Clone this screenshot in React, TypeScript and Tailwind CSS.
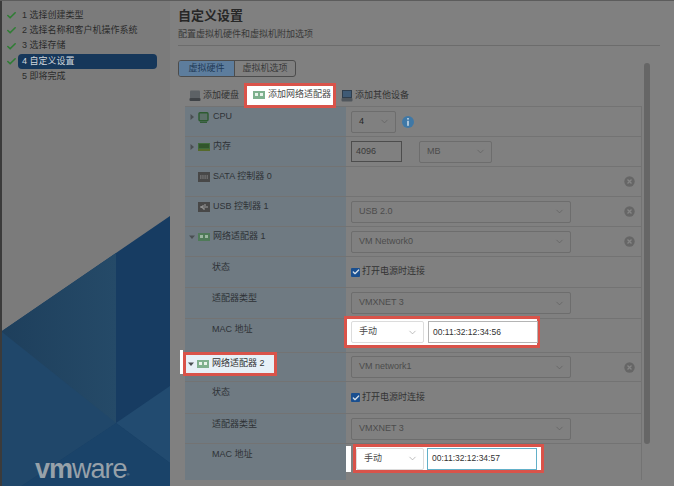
import { Check, ChevronDown } from "lucide-react";
import type { ReactNode } from "react";

const FONT = "font-['Liberation_Sans','Noto_Sans_CJK_SC',sans-serif]";

function Chevron({ className = "text-[#5f5f5f]" }: { className?: string }) {
  return <ChevronDown size={11} strokeWidth={1.5} className={className} />;
}

function Select({ w, text, light = false, dark = false }: { w: string; text: string; light?: boolean; dark?: boolean }) {
  return (
    <div
      className={`${w} h-[22px] shrink-0 flex items-center justify-between pl-[7px] pr-[5px] rounded-[2px] border text-[9px] ${
        light ? "bg-white border-[#dcdcdc] text-[#4a4a4a]" : dark ? "border-[#6d6d6d] text-[#262626]" : "border-[#6d6d6d] text-[#4c4c4c]"
      }`}
    >
      <span>{text}</span>
      <Chevron className={light ? "text-[#a0a0a0]" : "text-[#5f5f5f]"} />
    </div>
  );
}

function Remove() {
  return (
    <svg width="11" height="11" viewBox="0 0 11 11" className="shrink-0">
      <circle cx="5.5" cy="5.5" r="5.2" fill="#666" />
      <path d="M3.5 3.5l4 4M7.5 3.5l-4 4" stroke="#858585" strokeWidth="1.3" />
    </svg>
  );
}

function Arrow({ open = false }: { open?: boolean }) {
  return (
    <svg width="6" height="6" viewBox="0 0 6 6" className="shrink-0">
      {open ? <path d="M0 1.5h6L3 5z" fill="#4a4f52" /> : <path d="M1.5 0v6L5 3z" fill="#4a4f52" />}
    </svg>
  );
}

function NicIcon({ light = false }: { light?: boolean }) {
  return (
    <svg width="12" height="8" viewBox="0 0 12 8" className="shrink-0">
      <rect width="12" height="8" fill={light ? "#7fb08e" : "#4f7a58"} />
      <rect x="2" y="2" width="3" height="3" fill={light ? "#e8f3ea" : "#9bb5a0"} />
      <rect x="7" y="2" width="3" height="3" fill={light ? "#e8f3ea" : "#9bb5a0"} />
    </svg>
  );
}

function CpuIcon() {
  return (
    <svg width="11" height="11" viewBox="0 0 11 11" className="shrink-0">
      <rect x="1" y="0.8" width="9" height="8" rx="1" fill="#5c7068" stroke="#2d5b30" strokeWidth="1.4" />
      <path d="M2 10.3h7" stroke="#2d5b30" strokeWidth="1.2" />
    </svg>
  );
}

function RamIcon() {
  return (
    <svg width="12" height="10" viewBox="0 0 12 10" className="shrink-0">
      <rect y="1" width="12" height="6" fill="#3f6a3b" />
      <path d="M2 2v4M4 2v4M6 2v4M8 2v4M10 2v4" stroke="#25401f" strokeWidth="1" />
      <rect y="7" width="12" height="2" fill="#566a2c" />
    </svg>
  );
}

function ChipIcon({ usb = false }: { usb?: boolean }) {
  return (
    <svg width="12" height="10" viewBox="0 0 12 10" className="shrink-0">
      <rect width="12" height="10" fill="#484848" />
      {usb ? (
        <path d="M2 5h8M6 3h2M5 7h2M3.500 5l2-2M3.500 5l2 2" stroke="#b5b5b5" strokeWidth="0.8" fill="none" />
      ) : (
        <path d="M2 4h8M2 6h8" stroke="#8d8d8d" strokeWidth="1" strokeDasharray="1.500 0.700" />
      )}
    </svg>
  );
}

function DiskIcon() {
  return (
    <svg width="12" height="12" viewBox="0 0 12 12" className="shrink-0">
      <rect x="1" y="0.500" width="10" height="8" rx="1" fill="#5d6266" />
      <rect x="0.500" y="8" width="11" height="3" rx="1" fill="#3f4347" />
    </svg>
  );
}

function DeviceIcon() {
  return (
    <svg width="12" height="12" viewBox="0 0 12 12" className="shrink-0">
      <rect x="1.500" y="0.500" width="9" height="7" fill="#3f5a75" stroke="#2f3d4c" />
      <rect x="0.500" y="8" width="11" height="3.500" rx="1" fill="#50565c" />
    </svg>
  );
}

function Row({
  h,
  left,
  right,
  remove = false,
  last = false,
}: {
  h: string;
  left: ReactNode;
  right?: ReactNode;
  remove?: boolean;
  last?: boolean;
}) {
  return (
    <div className={`${h} grid grid-cols-[161px_1fr] ${last ? "" : "border-b border-[#737373]"}`}>
      <div className="relative bg-[#6f7a82] border-r-0 flex items-start text-[9px] text-[#2e3236]">{left}</div>
      <div className="relative flex items-center pl-[5px] pr-[6px]">
        <div className="flex-1 flex items-center gap-[6px]">{right}</div>
        {remove && <Remove />}
      </div>
    </div>
  );
}

function HwLabel({ arrow, open, icon, text }: { arrow?: boolean; open?: boolean; icon: ReactNode; text: string }) {
  return (
    <div className="flex items-center h-[12px] mt-[4px] pl-[4px] w-full">
      <span className="w-[9px] flex justify-start">{arrow && <Arrow open={open} />}</span>
      <span className="w-[15px] ml-[0px] flex justify-start pl-[0px]">{icon}</span>
      <span>{text}</span>
    </div>
  );
}

function SubLabel({ text }: { text: string }) {
  return <div className="pl-[27px] mt-[4px] leading-[12px]">{text}</div>;
}

function Mac({ value, focus = false }: { value: string; focus?: boolean }) {
  return (
    <div
      className={`w-[110px] h-[22px] shrink-0 bg-white border flex items-center pl-[4px] text-[8.5px] text-[#333] ${
        focus ? "border-[#62b0c9]" : "border-[#b4b4b4]"
      }`}
    >
      {value}
    </div>
  );
}

function StepItem({ n, label, done, active }: { n: number; label: string; done?: boolean; active?: boolean }) {
  return (
    <div className="flex items-center h-[15.300px]">
      <span className="w-[14px] shrink-0 pl-[4px]">
        {done && <Check size={11} strokeWidth={3.500} className="text-[#2f7d34]" />}
      </span>
      <span
        className={`ml-[2px] flex-1 h-[15px] pl-[4px] flex items-center rounded-[4px] text-[9px] ${
          active ? "bg-[#16375a] text-[#cfd6dc]" : "text-[#2b2b2b]"
        }`}
      >
        {n} {label}
      </span>
    </div>
  );
}

export default function App() {
  return (
    <div className={`${FONT} w-[674px] h-[486px] overflow-hidden flex bg-[#808080] border-t border-[#5c5c5c]`}>
      <aside className="relative w-[170px] shrink-0 h-full bg-[#7b7b7b] border-l-2 border-[#3b3b3b] overflow-hidden">
        <svg className="absolute inset-0" width="168" height="486" viewBox="2 0 168 486">
          <defs>
            <linearGradient id="g" x1="0" x2="1" y1="0" y2="0">
              <stop offset="0" stopColor="#1e3f5c" />
              <stop offset="1" stopColor="#254a68" />
            </linearGradient>
          </defs>
          <polygon points="2,330 170,215 170,486 2,486" fill="#173c62" />
          <polygon points="2,330 116,252 116,422 20,486 2,486" fill="url(#g)" />
          <polygon points="2,331 116,422 20,486 2,486" fill="#20476a" />
          <polygon points="116,422 170,385 170,462" fill="#224b70" />
          <polygon points="116,422 170,462 170,486 20,486" fill="#1a4369" />
        </svg>
        <div className="relative pt-[7px] pr-[13px]">
          <StepItem n={1} label="选择创建类型" done />
          <StepItem n={2} label="选择名称和客户机操作系统" done />
          <StepItem n={3} label="选择存储" done />
          <StepItem n={4} label="自定义设置" done active />
          <StepItem n={5} label="即将完成" />
        </div>
        <div className="absolute left-[33px] bottom-[2px] text-[27px] leading-[30px] text-[#97a1a9] tracking-[-1px]">
          <span className="font-bold">vm</span>
          <span>ware</span>
          <sup className="text-[4px]">®</sup>
        </div>
      </aside>

      <main className="flex-1 flex pl-[8px] overflow-hidden">
        <div className="w-[474px] shrink-0 flex flex-col">
          <h1 className="mt-[6px] text-[13px] leading-[18px] font-bold text-[#272727]">自定义设置</h1>
          <p className="mt-[3px] text-[9px] leading-[13px] text-[#383838]">配置虚拟机硬件和虚拟机附加选项</p>
          <div className="mt-[4px] h-px w-[482px] bg-[#6c6c6c]" />

          <div className="mt-[14px] flex w-fit h-[17px] rounded-[3px] border border-[#4c4c4c] overflow-hidden text-[9px]">
            <div className="w-[55px] flex items-center justify-center bg-[#5d7d9d] text-[#1f3a57]">虚拟硬件</div>
            <div className="w-[61px] flex items-center justify-center border-l border-[#4c4c4c] text-[#3a3a3a]">虚拟机选项</div>
          </div>

          <div className="mt-[8px] h-[21px] flex items-center text-[9px] text-[#333] pl-[11px]">
            <DiskIcon />
            <span className="ml-[2px]">添加硬盘</span>
            <div className="ml-[5px] w-[92px] h-[25px] -mt-[1px] shrink-0 bg-white border-[3px] border-[#d9534a] flex items-center pl-[6px] text-[#4a4a4a] z-10">
              <NicIcon light />
              <span className="ml-[3px] whitespace-nowrap">添加网络适配器</span>
            </div>
            <span className="ml-[5px]"><DeviceIcon /></span>
            <span className="ml-[2px]">添加其他设备</span>
          </div>

          <div className="ml-[7px] w-[457px] border-t border-r border-[#737373] text-[9px]">
            <Row
              h="h-[30px]"
              left={<HwLabel arrow icon={<CpuIcon />} text="CPU" />}
              right={
                <>
                  <Select w="w-[45px]" text="4" dark />
                  <svg width="12" height="12" viewBox="0 0 12 12" className="shrink-0">
                    <circle cx="6" cy="6" r="6" fill="#3f78a6" />
                    <rect x="5.200" y="2" width="1.600" height="1.600" fill="#c8d8e4" />
                    <rect x="5.200" y="4.800" width="1.600" height="5" fill="#c8d8e4" />
                  </svg>
                </>
              }
            />
            <Row
              h="h-[30px]"
              left={<HwLabel arrow icon={<RamIcon />} text="内存" />}
              right={
                <>
                  <div className="w-[51px] h-[21px] shrink-0 border border-[#4d4d4d] flex items-center pl-[4px] text-[#3a3a3a]">4096</div>
                  <span className="w-[5px]" />
                  <Select w="w-[73px]" text="MB" />
                </>
              }
            />
            <Row h="h-[30px]" left={<HwLabel icon={<ChipIcon />} text="SATA 控制器 0" />} remove />
            <Row
              h="h-[30px]"
              left={<HwLabel icon={<ChipIcon usb />} text="USB 控制器 1" />}
              right={<Select w="w-[220px]" text="USB 2.0" />}
              remove
            />
            <Row
              h="h-[30px]"
              left={<HwLabel arrow open icon={<NicIcon />} text="网络适配器 1" />}
              right={<Select w="w-[220px]" text="VM Network0" />}
              remove
            />
            <Row
              h="h-[31px]"
              left={<SubLabel text="状态" />}
              right={
                <div className="flex items-center gap-[2px] text-[9px] text-[#333]">
                  <span className="w-[9px] h-[9px] rounded-[1px] bg-[#1a4f8f] flex items-center justify-center">
                    <Check size={8} strokeWidth={4} className="text-[#d5dfe8]" />
                  </span>
                  打开电源时连接
                </div>
              }
            />
            <Row h="h-[31px]" left={<SubLabel text="适配器类型" />} right={<Select w="w-[220px]" text="VMXNET 3" />} />
            <Row
              h="h-[34px]"
              left={<SubLabel text="MAC 地址" />}
              right={
                <>
                  <div className="absolute left-[-2px] top-[-3px] w-[196px] h-[32px] bg-white border-[3px] border-[#d9534a] z-10 flex items-center pl-[4px] gap-[4px]">
                    <Select w="w-[73px]" text="手动" light />
                    <Mac value="00:11:32:12:34:56" />
                  </div>
                </>
              }
            />
            <Row
              h="h-[29px]"
              left={
                <>
                  <div className="absolute left-[-5px] top-[-3px] w-[3px] h-[24px] bg-white" />
                  <div className="absolute left-[-2px] top-[-1px] w-[94px] h-[24px] z-10 bg-[#e7f0f7] border-[3px] border-[#d9534a] flex items-center pl-[2px] text-[#333]">
                    <span className="w-[9px] flex"><Arrow open /></span>
                    <span className="w-[15px] flex"><NicIcon light /></span>
                    <span>网络适配器 2</span>
                  </div>
                </>
              }
              right={<Select w="w-[220px]" text="VM network1" />}
              remove
            />
            <Row
              h="h-[32px]"
              left={<SubLabel text="状态" />}
              right={
                <div className="flex items-center gap-[2px] text-[9px] text-[#333]">
                  <span className="w-[9px] h-[9px] rounded-[1px] bg-[#1a4f8f] flex items-center justify-center">
                    <Check size={8} strokeWidth={4} className="text-[#d5dfe8]" />
                  </span>
                  打开电源时连接
                </div>
              }
            />
            <Row h="h-[30px]" left={<SubLabel text="适配器类型" />} right={<Select w="w-[220px]" text="VMXNET 3" />} />
            <Row
              h="h-[36px]"
              last
              left={<SubLabel text="MAC 地址" />}
              right={
                <>
                  <div className="absolute left-[0px] top-[2px] w-[5px] h-[26px] bg-white" />
                  <div className="absolute left-[7px] top-[0px] w-[191px] h-[29px] bg-white border-[3px] border-[#d9534a] z-10 flex items-center gap-[3px]">
                    <Select w="w-[68px]" text="手动" light />
                    <Mac value="00:11:32:12:34:57" focus />
                  </div>
                </>
              }
            />
          </div>
        </div>
        <div className="ml-[-8px] mt-[62px] w-[6px] h-[381px] rounded-[3px] bg-[#666] shrink-0 translate-x-[0px]" />
      </main>
    </div>
  );
}
